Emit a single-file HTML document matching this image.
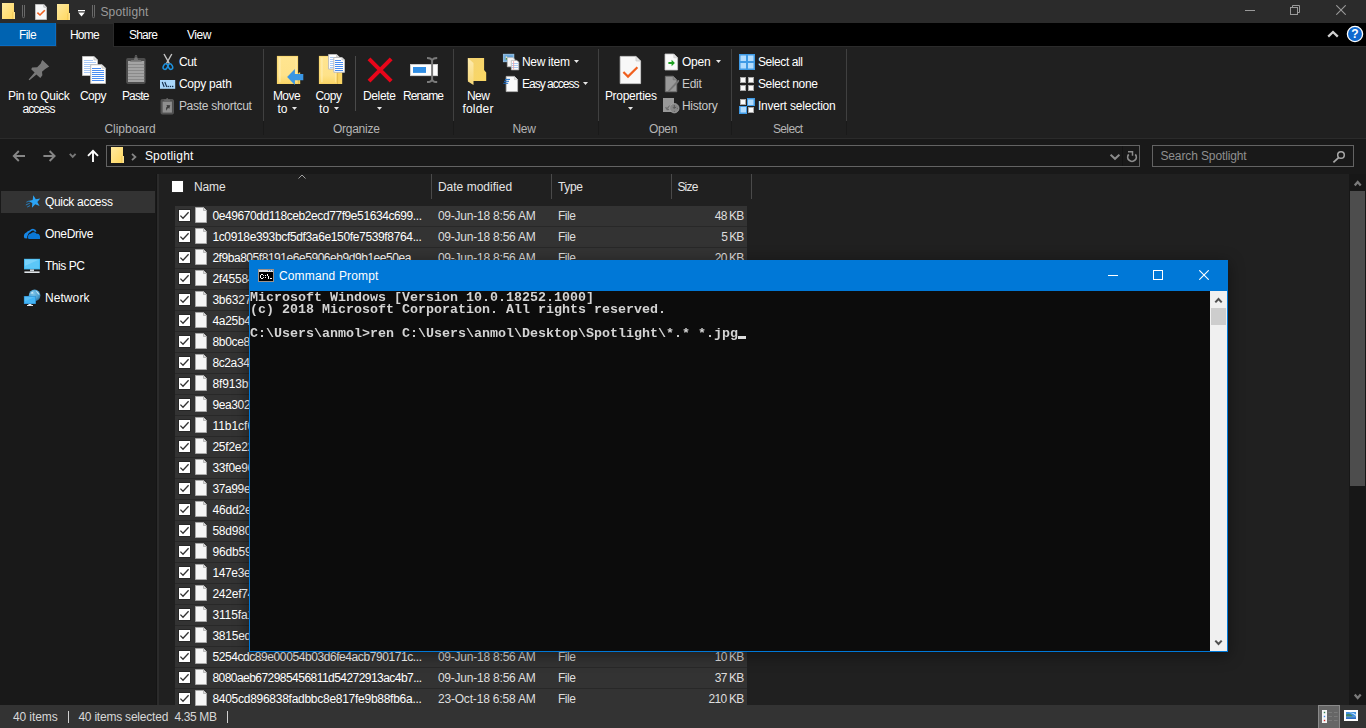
<!DOCTYPE html>
<html lang="en"><head><meta charset="utf-8"><title>Spotlight</title>
<style>
html,body{margin:0;padding:0;font-family:"Liberation Sans", sans-serif;}
body{width:1366px;height:728px;overflow:hidden;background:#191919;position:relative;font-family:"Liberation Sans", sans-serif;}
#r{position:absolute;left:0;top:0;width:1366px;height:728px;overflow:hidden;}
#r div,#r svg,#r span.t,#r pre{position:absolute;display:block;}
span.t{white-space:pre;font-family:"Liberation Sans", sans-serif;}
pre.c{margin:0;font-family:"Liberation Mono", monospace;font-weight:700;font-size:13.333px;line-height:12px;height:12px;color:#d4d4d4;will-change:transform;}
</style></head>
<body><div id="r">
<div style="left:0px;top:0px;width:1366px;height:23px;background:#2b2b2b;"></div>
<div style="left:0px;top:23px;width:1366px;height:23px;background:#000;"></div>
<div style="left:0px;top:23px;width:56px;height:23px;background:#0063b1;"></div>
<div style="left:56px;top:23px;width:58px;height:24px;background:#202020;"></div>
<div style="left:0px;top:46px;width:1366px;height:92px;background:#202020;"></div>
<div style="left:56px;top:23px;width:58px;height:1px;background:#2b2b2b;"></div>
<div style="left:56px;top:23px;width:1px;height:24px;background:#2b2b2b;"></div>
<div style="left:0px;top:46px;width:57px;height:1px;background:#2b2b2b;"></div>
<div style="left:0px;top:45px;width:56px;height:1px;background:#0a6cc2;"></div>
<div style="left:55px;top:23px;width:1px;height:23px;background:#0a6cc2;"></div>
<div style="left:113px;top:23px;width:1px;height:24px;background:#2b2b2b;"></div>
<div style="left:114px;top:46px;width:1252px;height:1px;background:#2b2b2b;"></div>
<div style="left:0px;top:138px;width:1366px;height:1px;background:#2b2b2b;"></div>
<div style="left:0px;top:139px;width:1366px;height:35px;background:#191919;"></div>
<div style="left:0px;top:174px;width:157px;height:531px;background:#191919;"></div>
<div style="left:156px;top:174px;width:1px;height:531px;background:#151515;"></div>
<div style="left:157px;top:174px;width:2px;height:531px;background:#2b2b2b;"></div>
<div style="left:159px;top:174px;width:1190px;height:531px;background:#202020;"></div>
<div style="left:1349px;top:174px;width:17px;height:531px;background:#171717;"></div>
<div style="left:1350px;top:191px;width:15px;height:295px;background:#4d4d4d;"></div>
<div style="left:0px;top:705px;width:1366px;height:23px;background:#333333;"></div>
<svg style="left:2px;top:3px;" width="14" height="17" viewBox="0 0 14 17"><defs><linearGradient id="fg2" x1="0" y1="0" x2="1" y2="1"><stop offset="0" stop-color="#ffeaa0"/><stop offset="1" stop-color="#ffd75e"/></linearGradient></defs><rect x="0" y="0" width="12" height="16" fill="url(#fg2)"/><rect x="11" y="9" width="2" height="7" fill="#ffe38c"/><rect x="10.6" y="9" width="0.7" height="7" fill="#e9bd4a"/></svg>
<svg style="left:22px;top:5px;" width="4" height="14" viewBox="0 0 4 14"><path d="M0.5 0V11.6Q0.5 12.7 1.5 12.7Q2.5 12.7 2.5 11.6V0" fill="none" stroke="#707070" stroke-width="0.9"/></svg>
<svg style="left:35px;top:4px;" width="12" height="16" viewBox="0 0 12 16"><path d="M0.5 0.5H8.8L11.5 3.2V15.5H0.5Z" fill="#f8f8f8" stroke="#bdbdbd" stroke-width="1"/><path d="M8.8 0.5V3.2H11.5" fill="#ececec" stroke="#b4b4b4" stroke-width="0.8"/><path d="M2.4 8.6L5 11L9.8 6.2" fill="none" stroke="#f0601f" stroke-width="1.6"/></svg>
<svg style="left:57px;top:4px;" width="14" height="17" viewBox="0 0 14 17"><defs><linearGradient id="fg57" x1="0" y1="0" x2="1" y2="1"><stop offset="0" stop-color="#ffeaa0"/><stop offset="1" stop-color="#ffd75e"/></linearGradient></defs><rect x="0" y="0" width="12" height="16" fill="url(#fg57)"/><rect x="11" y="9" width="2" height="7" fill="#ffe38c"/><rect x="10.6" y="9" width="0.7" height="7" fill="#e9bd4a"/></svg>
<svg style="left:77px;top:9px;" width="9" height="9" viewBox="0 0 9 9"><rect x="1" y="1" width="7" height="1.3" fill="#fff"/><path d="M1.2 3.6H7.8L4.5 7.6Z" fill="#fff"/></svg>
<svg style="left:92px;top:5px;" width="4" height="14" viewBox="0 0 4 14"><path d="M0.5 0V11.6Q0.5 12.7 1.5 12.7Q2.5 12.7 2.5 11.6V0" fill="none" stroke="#707070" stroke-width="0.9"/></svg>
<span id="t1" class="t" style="top:4px;font-size:12px;line-height:17px;color:#9a9a9a;letter-spacing:0.166px;left:100.40px;">Spotlight</span>
<svg style="left:1245px;top:10px;" width="10" height="1" viewBox="0 0 10 1"><rect width="10" height="1" fill="#9a9a9a"/></svg>
<svg style="left:1290px;top:5px;" width="10" height="10" viewBox="0 0 10 10"><path d="M2.5 2.5V0.5H9.5V7.5H7.5" fill="none" stroke="#9a9a9a"/><rect x="0.5" y="2.5" width="7" height="7" fill="none" stroke="#9a9a9a"/></svg>
<svg style="left:1336px;top:5px;" width="10" height="10" viewBox="0 0 10 10"><path d="M0.3 0.3L9.7 9.7M9.7 0.3L0.3 9.7" stroke="#9a9a9a" stroke-width="1.1" fill="none"/></svg>
<span id="t2" class="t" style="top:27px;font-size:12px;line-height:17px;color:#fff;letter-spacing:-0.536px;left:18.90px;">File</span>
<span id="t3" class="t" style="top:27px;font-size:12px;line-height:17px;color:#fff;letter-spacing:-0.704px;left:69.90px;">Home</span>
<span id="t4" class="t" style="top:27px;font-size:12px;line-height:17px;color:#fff;letter-spacing:-0.766px;left:128.90px;">Share</span>
<span id="t5" class="t" style="top:27px;font-size:12px;line-height:17px;color:#fff;letter-spacing:-0.399px;left:186.90px;">View</span>
<svg style="left:1327px;top:30px;" width="12" height="8" viewBox="0 0 12 8"><path d="M1.2 6.6L6 2L10.8 6.6" fill="none" stroke="#d0d0d0" stroke-width="2.3"/></svg>
<svg style="left:1346px;top:25px;" width="18" height="18" viewBox="0 0 18 18"><circle cx="9" cy="9" r="7.6" fill="#0f69cf" stroke="#fff" stroke-width="1.3"/><text x="9" y="13.4" font-family="Liberation Sans" font-weight="700" font-size="12" text-anchor="middle" fill="#fff">?</text></svg>
<div style="left:263px;top:49px;width:1px;height:72px;background:#404040;"></div>
<div style="left:263px;top:121px;width:1px;height:14px;background:#1a1a1a;"></div>
<div style="left:453px;top:49px;width:1px;height:72px;background:#404040;"></div>
<div style="left:453px;top:121px;width:1px;height:14px;background:#1a1a1a;"></div>
<div style="left:598px;top:49px;width:1px;height:72px;background:#404040;"></div>
<div style="left:598px;top:121px;width:1px;height:14px;background:#1a1a1a;"></div>
<div style="left:731px;top:49px;width:1px;height:72px;background:#404040;"></div>
<div style="left:731px;top:121px;width:1px;height:14px;background:#1a1a1a;"></div>
<div style="left:846px;top:49px;width:1px;height:72px;background:#404040;"></div>
<div style="left:846px;top:121px;width:1px;height:14px;background:#1a1a1a;"></div>
<div style="left:355px;top:56px;width:1px;height:55px;background:#4a4a4a;"></div>
<svg style="left:28px;top:59px;" width="23" height="23" viewBox="0 0 23 23"><path d="M14.4 0.9L21.2 7.5L17.2 10L14 12.8L14.4 16.2L12.3 19.1L8.4 15.4L1.5 21.3L0.6 20.4L6.6 13.5L3.2 10.2L4.1 8.5L9.2 8.2L12.8 4.6L13.5 2.4Z" fill="#787878"/></svg>
<span id="t6" class="t" style="top:88px;font-size:12px;line-height:17px;color:#fff;letter-spacing:-0.250px;left:7.90px;">Pin to Quick</span>
<span id="t7" class="t" style="top:101px;font-size:12px;line-height:17px;color:#fff;letter-spacing:-0.860px;left:22.40px;">access</span>
<svg style="left:82px;top:55px;" width="25" height="30" viewBox="0 0 25 30"><path d="M0.5 1.5H12L15.5 5V20.5H0.5Z" fill="#fff" stroke="#bcbcbc" stroke-width="1"/><path d="M12 1.5V5H15.5" fill="#e8e8e8" stroke="#bcbcbc" stroke-width="0.7"/><rect shape-rendering="crispEdges" x="2" y="5" width="9" height="1" fill="#a9c9f6"/><rect shape-rendering="crispEdges" x="2" y="7" width="12" height="1" fill="#a9c9f6"/><rect shape-rendering="crispEdges" x="2" y="9" width="12" height="1" fill="#a9c9f6"/><rect shape-rendering="crispEdges" x="2" y="11" width="12" height="1" fill="#a9c9f6"/><rect shape-rendering="crispEdges" x="2" y="13" width="12" height="1" fill="#a9c9f6"/><rect shape-rendering="crispEdges" x="2" y="15" width="12" height="1" fill="#a9c9f6"/><rect shape-rendering="crispEdges" x="2" y="17" width="12" height="1" fill="#a9c9f6"/><path d="M8.7 9.7H20.0L23.5 13.2V28.5H8.7Z" fill="#fff" stroke="#bcbcbc" stroke-width="1"/><path d="M20.0 9.7V13.2H23.5" fill="#e8e8e8" stroke="#bcbcbc" stroke-width="0.7"/><rect shape-rendering="crispEdges" x="10" y="13" width="9" height="1" fill="#4a8df0"/><rect shape-rendering="crispEdges" x="10" y="15" width="12" height="1" fill="#4a8df0"/><rect shape-rendering="crispEdges" x="10" y="17" width="12" height="1" fill="#4a8df0"/><rect shape-rendering="crispEdges" x="10" y="19" width="12" height="1" fill="#4a8df0"/><rect shape-rendering="crispEdges" x="10" y="21" width="12" height="1" fill="#4a8df0"/><rect shape-rendering="crispEdges" x="10" y="23" width="12" height="1" fill="#4a8df0"/><rect shape-rendering="crispEdges" x="10" y="25" width="12" height="1" fill="#4a8df0"/></svg>
<span id="t8" class="t" style="top:88px;font-size:12px;line-height:17px;color:#fff;letter-spacing:-0.454px;left:79.90px;">Copy</span>
<svg style="left:125px;top:54px;" width="22" height="31" viewBox="0 0 22 31"><rect x="1.1" y="4.1" width="19.6" height="25.8" rx="1.8" fill="#4e4e4e"/><rect x="3" y="7" width="16.2" height="21" fill="#a4a4a4"/><rect x="3" y="10" width="16.2" height="1" fill="#8a8a8a"/><rect x="3" y="13" width="16.2" height="1" fill="#8a8a8a"/><rect x="3" y="16" width="16.2" height="1" fill="#8a8a8a"/><rect x="3" y="19" width="16.2" height="1" fill="#8a8a8a"/><rect x="3" y="22" width="16.2" height="1" fill="#8a8a8a"/><rect x="3" y="25" width="16.2" height="1" fill="#8a8a8a"/><path d="M4.9 7.8L6.4 5.9H8.9L9.6 3.8Q9.6 1 11 1Q12.4 1 12.4 3.8L13.1 5.9H15.6L17 7.8Z" fill="#747474"/><circle cx="11" cy="2.8" r="0.8" fill="#3a3a3a"/></svg>
<span id="t9" class="t" style="top:88px;font-size:12px;line-height:17px;color:#fff;letter-spacing:-0.798px;left:121.90px;">Paste</span>
<svg style="left:161px;top:53px;" width="14" height="18" viewBox="0 0 14 18"><path d="M3 1L8.4 10.6M10.8 1L5.4 10.6" stroke="#c4c4c4" stroke-width="1.4" fill="none"/><ellipse cx="4.4" cy="13.6" rx="2" ry="2.9" transform="rotate(28 4.4 13.6)" fill="none" stroke="#1e93e0" stroke-width="1.5"/><ellipse cx="9.4" cy="13.6" rx="2" ry="2.9" transform="rotate(-28 9.4 13.6)" fill="none" stroke="#1e93e0" stroke-width="1.5"/></svg>
<span id="t10" class="t" style="top:54px;font-size:12px;line-height:17px;color:#fff;letter-spacing:-0.329px;left:178.90px;">Cut</span>
<svg style="left:160px;top:80px;" width="16" height="10" viewBox="0 0 16 10"><rect x="0" y="0" width="15.2" height="8.8" fill="#aad7fb"/><path d="M2.2 2L4.2 7M4.8 2L6.8 7" stroke="#15304e" stroke-width="1.1" fill="none"/><rect x="7.6" y="5.8" width="1.3" height="1.3" fill="#15304e"/><rect x="9.8" y="5.8" width="1.3" height="1.3" fill="#15304e"/><rect x="12" y="5.8" width="1.3" height="1.3" fill="#15304e"/></svg>
<span id="t11" class="t" style="top:76px;font-size:12px;line-height:17px;color:#fff;letter-spacing:-0.223px;left:178.90px;">Copy path</span>
<svg style="left:160px;top:97px;" width="15" height="18" viewBox="0 0 15 18"><rect x="1" y="2.5" width="12.5" height="14.6" rx="1.3" fill="#4f4f4f" stroke="#5c5c5c" stroke-width="0.8"/><rect x="2.6" y="4.6" width="9.3" height="11" fill="#8f8f8f"/><path d="M4.2 4.6V2.6H6Q6.2 1 7.2 1Q8.2 1 8.4 2.6H10.2V4.6Z" fill="#666"/><path d="M5 12.8Q5.2 9.4 8 9.2V7.6L11 10.2L8 12.6V11Q6.2 11 5 12.8Z" fill="#3c3c3c" transform="rotate(-35 7.6 10.4)"/></svg>
<span id="t12" class="t" style="top:98px;font-size:12px;line-height:17px;color:#c9c9c9;letter-spacing:-0.287px;left:178.90px;">Paste shortcut</span>
<span id="t13" class="t" style="top:121px;font-size:12px;line-height:17px;color:#b4b4b4;letter-spacing:-0.019px;left:104.40px;">Clipboard</span>
<svg style="left:276px;top:55px;" width="28" height="31" viewBox="0 0 28 31"><defs><linearGradient id="fbg" x1="0" y1="0" x2="0" y2="1"><stop offset="0" stop-color="#ffe590"/><stop offset="0.7" stop-color="#fee28a"/><stop offset="1" stop-color="#fbd769"/></linearGradient></defs><rect x="0.9" y="0.9" width="21.2" height="28.1" fill="#f7d366"/><rect x="1.6" y="1.6" width="19.8" height="26.5" fill="url(#fbg)"/><rect x="3.5" y="2.5" width="0.9" height="24.700000000000003" fill="#fff3c4" opacity="0.85"/><rect x="19.7" y="2.5" width="0.8" height="24.700000000000003" fill="#fff3c4" opacity="0.6"/><path d="M22.1 19L23 17.6H24.2V29H22.1Z" fill="#f8cf58"/><path d="M11.1 22L18.9 14V18.9H27.3V25.2H18.9V30.1Z" fill="#3a96e4"/></svg>
<span id="t14" class="t" style="top:88px;font-size:12px;line-height:17px;color:#fff;letter-spacing:-0.536px;left:272.90px;">Move</span>
<span id="t15" class="t" style="top:101px;font-size:12px;line-height:17px;color:#fff;letter-spacing:0.092px;left:277.40px;">to</span>
<svg style="left:292px;top:107px;" width="5" height="3" viewBox="0 0 5 3"><path d="M0 0H5L2.5 3Z" fill="#e6e6e6"/></svg>
<svg style="left:318px;top:53px;" width="28" height="33" viewBox="0 0 28 33"><defs><linearGradient id="fbg" x1="0" y1="0" x2="0" y2="1"><stop offset="0" stop-color="#ffe590"/><stop offset="0.7" stop-color="#fee28a"/><stop offset="1" stop-color="#fbd769"/></linearGradient></defs><rect x="0.9" y="2.9" width="18.4" height="28.1" fill="#f7d366"/><rect x="1.6" y="3.5999999999999996" width="17.0" height="26.5" fill="url(#fbg)"/><rect x="3.5" y="4.5" width="0.9" height="24.700000000000003" fill="#fff3c4" opacity="0.85"/><rect x="16.9" y="4.5" width="0.8" height="24.700000000000003" fill="#fff3c4" opacity="0.6"/><rect x="19.3" y="14" width="4.9" height="17" fill="#f9d463"/><rect x="19.3" y="14" width="0.8" height="17" fill="#eec351"/><path d="M10.6 1.5H18.7L21.2 4V16.1H10.6Z" fill="#fff" stroke="#bcbcbc" stroke-width="1"/><path d="M18.7 1.5V4H21.2" fill="#e8e8e8" stroke="#bcbcbc" stroke-width="0.7"/><rect shape-rendering="crispEdges" x="12" y="4" width="6" height="1" fill="#a9c9f6"/><rect shape-rendering="crispEdges" x="12" y="6" width="8" height="1" fill="#a9c9f6"/><rect shape-rendering="crispEdges" x="12" y="8" width="8" height="1" fill="#a9c9f6"/><rect shape-rendering="crispEdges" x="12" y="10" width="8" height="1" fill="#a9c9f6"/><rect shape-rendering="crispEdges" x="12" y="12" width="8" height="1" fill="#a9c9f6"/><rect shape-rendering="crispEdges" x="12" y="14" width="8" height="1" fill="#a9c9f6"/><path d="M15.8 4.5H24.0L26.5 7V19.3H15.8Z" fill="#fff" stroke="#bcbcbc" stroke-width="1"/><path d="M24.0 4.5V7H26.5" fill="#e8e8e8" stroke="#bcbcbc" stroke-width="0.7"/><rect shape-rendering="crispEdges" x="17" y="7" width="6" height="1" fill="#4a8df0"/><rect shape-rendering="crispEdges" x="17" y="9" width="8" height="1" fill="#4a8df0"/><rect shape-rendering="crispEdges" x="17" y="11" width="8" height="1" fill="#4a8df0"/><rect shape-rendering="crispEdges" x="17" y="13" width="8" height="1" fill="#4a8df0"/><rect shape-rendering="crispEdges" x="17" y="15" width="8" height="1" fill="#4a8df0"/><rect shape-rendering="crispEdges" x="17" y="17" width="8" height="1" fill="#4a8df0"/></svg>
<span id="t16" class="t" style="top:88px;font-size:12px;line-height:17px;color:#fff;letter-spacing:-0.454px;left:315.40px;">Copy</span>
<span id="t17" class="t" style="top:101px;font-size:12px;line-height:17px;color:#fff;letter-spacing:0.092px;left:319.00px;">to</span>
<svg style="left:334px;top:107px;" width="5" height="3" viewBox="0 0 5 3"><path d="M0 0H5L2.5 3Z" fill="#e6e6e6"/></svg>
<svg style="left:367px;top:57px;" width="26" height="26" viewBox="0 0 26 26"><path d="M2 1.8L24.2 24.2M24.2 1.8L2 24.2" stroke="#e8061a" stroke-width="4" fill="none"/></svg>
<span id="t18" class="t" style="top:88px;font-size:12px;line-height:17px;color:#fff;letter-spacing:-0.331px;left:362.90px;">Delete</span>
<svg style="left:377px;top:107px;" width="5" height="3" viewBox="0 0 5 3"><path d="M0 0H5L2.5 3Z" fill="#e6e6e6"/></svg>
<svg style="left:409px;top:56px;" width="30" height="28" viewBox="0 0 30 28"><rect x="1.3" y="8.3" width="27.4" height="11.5" fill="#fdfdfd" stroke="#d5d5d5" stroke-width="0.6"/><rect x="4" y="11" width="13" height="5.9" fill="#2f8de4"/><path d="M18 1.9Q22.4 1.9 23.1 4.6Q23.8 1.9 28.2 1.9M18 26.1Q22.4 26.1 23.1 23.4Q23.8 26.1 28.2 26.1M23.1 4V24" fill="none" stroke="#7a7a7a" stroke-width="2"/></svg>
<span id="t19" class="t" style="top:88px;font-size:12px;line-height:17px;color:#fff;letter-spacing:-0.860px;left:402.90px;">Rename</span>
<span id="t20" class="t" style="top:121px;font-size:12px;line-height:17px;color:#b4b4b4;letter-spacing:-0.250px;left:332.90px;">Organize</span>
<svg style="left:467px;top:57px;" width="21" height="30" viewBox="0 0 21 30"><defs><linearGradient id="nf1" x1="0" y1="0" x2="1" y2="1"><stop offset="0" stop-color="#f3d272"/><stop offset="1" stop-color="#fbd862"/></linearGradient><linearGradient id="nf2" x1="0" y1="0" x2="0" y2="1"><stop offset="0" stop-color="#fdebb0"/><stop offset="1" stop-color="#f7d878"/></linearGradient></defs><path d="M0.9 0.9H17.1V13L19.2 15.4V24H5V26L0.9 23Z" fill="url(#nf1)"/><path d="M0.9 0.9L6.5 6V28L0.9 24.5Z" fill="url(#nf2)"/></svg>
<span id="t21" class="t" style="top:88px;font-size:12px;line-height:17px;color:#fff;letter-spacing:-0.439px;left:466.90px;">New</span>
<span id="t22" class="t" style="top:101px;font-size:12px;line-height:17px;color:#fff;letter-spacing:0.195px;left:462.40px;">folder</span>
<svg style="left:502px;top:53px;" width="18" height="18" viewBox="0 0 18 18"><rect x="1.3" y="1.2" width="10.6" height="7.6" fill="#8cc0ea" stroke="#9ecdf0" stroke-width="0.7"/><rect x="2.4" y="2.3" width="8.4" height="5.4" fill="#5f9fd6"/><rect x="3.6" y="3.4" width="1.6" height="3.4" fill="#e6e0c0"/><rect x="3.8" y="5" width="1.2" height="1.8" fill="#3f8a4a"/><path d="M5.3 4.6H11L12.8 6.4V13.8H5.3Z" fill="#f7f7f7" stroke="#b5b5b5" stroke-width="0.7"/><path d="M9.3 7.4H15L16.8 9.2V16.9H9.3Z" fill="#fcfcfc" stroke="#adadad" stroke-width="0.7"/><path d="M10 10.5H16M10 12.5H16M10 14.5H16" stroke="#9fc4f0" stroke-width="0.9"/><path d="M11.6 8V16.4" stroke="#f0a0a0" stroke-width="0.8"/></svg>
<span id="t23" class="t" style="top:54px;font-size:12px;line-height:17px;color:#fff;letter-spacing:-0.289px;left:521.90px;">New item</span>
<svg style="left:574px;top:60px;" width="5" height="3" viewBox="0 0 5 3"><path d="M0 0H5L2.5 3Z" fill="#e6e6e6"/></svg>
<svg style="left:502px;top:75px;" width="18" height="18" viewBox="0 0 18 18"><path d="M4.2 1.4H12.4L15.6 4.6V16.6H4.2Z" fill="#fbfbfb" stroke="#bdbdbd" stroke-width="0.8"/><path d="M12.4 1.4V4.6H15.6" fill="#e1e1e1" stroke="#bdbdbd" stroke-width="0.6"/><path d="M3 4.4H8M2 6.3H7M1.3 8.3H6.2" stroke="#1e6fc8" stroke-width="1"/></svg>
<span id="t24" class="t" style="top:76px;font-size:12px;line-height:17px;color:#fff;letter-spacing:-0.969px;left:521.90px;">Easy access</span>
<svg style="left:583px;top:82px;" width="5" height="3" viewBox="0 0 5 3"><path d="M0 0H5L2.5 3Z" fill="#e6e6e6"/></svg>
<span id="t25" class="t" style="top:121px;font-size:12px;line-height:17px;color:#b4b4b4;letter-spacing:-0.272px;left:512.40px;">New</span>
<svg style="left:619px;top:55px;" width="23" height="30" viewBox="0 0 23 30"><path d="M1.2 1.4H17L21.6 6V28.6H1.2Z" fill="#f8f8f8" stroke="#d2d2d2" stroke-width="0.8"/><path d="M17 1.4V6H21.6" fill="#e2e2e2" stroke="#c4c4c4" stroke-width="0.7"/><path d="M4.4 17L9 21.6L18.4 12.2" fill="none" stroke="#f0601f" stroke-width="2.2"/></svg>
<span id="t26" class="t" style="top:88px;font-size:12px;line-height:17px;color:#fff;letter-spacing:-0.300px;left:604.90px;">Properties</span>
<svg style="left:628px;top:107px;" width="5" height="3" viewBox="0 0 5 3"><path d="M0 0H5L2.5 3Z" fill="#e6e6e6"/></svg>
<svg style="left:664px;top:53px;" width="15" height="18" viewBox="0 0 15 18"><path d="M1 1H9.8L13.6 4.8V17H1Z" fill="#fafafa" stroke="#c4c4c4" stroke-width="0.8"/><path d="M9.8 1V4.8H13.6" fill="#e1e1e1" stroke="#c4c4c4" stroke-width="0.6"/><path d="M4.4 9.1H7.6V6.8L10.9 10L7.6 13.2V10.9H4.4Z" fill="#1fa022"/></svg>
<span id="t27" class="t" style="top:54px;font-size:12px;line-height:17px;color:#fff;letter-spacing:-0.165px;left:681.90px;">Open</span>
<svg style="left:716px;top:60px;" width="5" height="3" viewBox="0 0 5 3"><path d="M0 0H5L2.5 3Z" fill="#e6e6e6"/></svg>
<svg style="left:664px;top:75px;" width="16" height="18" viewBox="0 0 16 18"><path d="M1.3 1.2H9.2L12.8 4.8V16.8H1.3Z" fill="#999" stroke="#6c6c6c" stroke-width="0.8"/><path d="M9.2 1.2V4.8H12.8" fill="#8a8a8a" stroke="#6c6c6c" stroke-width="0.6"/><path d="M4 15.8L13 5.8L14.6 7.2L5.4 16.4Z" fill="#777"/><path d="M13 5.8L15.2 5L14.6 7.2Z" fill="#888"/></svg>
<span id="t28" class="t" style="top:76px;font-size:12px;line-height:17px;color:#c9c9c9;letter-spacing:-0.247px;left:681.90px;">Edit</span>
<svg style="left:662px;top:97px;" width="18" height="18" viewBox="0 0 18 18"><rect x="1" y="1" width="11" height="14" fill="#999"/><path d="M3.6 10.2L5.2 12.6L7.4 12.4M4.6 12Q7 9 9.4 8.4" fill="none" stroke="#6c6c6c" stroke-width="1.2"/><circle cx="12.3" cy="11.2" r="4.7" fill="#878787" stroke="#a6a6a6" stroke-width="0.8"/><path d="M12.3 8V11.2L14.2 10M10.8 10.4L12.3 11.2" fill="none" stroke="#555" stroke-width="0.9"/><circle cx="12.3" cy="14.2" r="0.5" fill="#555"/><circle cx="15.3" cy="11.2" r="0.5" fill="#555"/></svg>
<span id="t29" class="t" style="top:98px;font-size:12px;line-height:17px;color:#c9c9c9;letter-spacing:-0.235px;left:681.90px;">History</span>
<span id="t30" class="t" style="top:121px;font-size:12px;line-height:17px;color:#b4b4b4;letter-spacing:-0.290px;left:648.90px;">Open</span>
<svg style="left:739px;top:54px;" width="16" height="16" viewBox="0 0 16 16"><rect x="0" y="0" width="8" height="8" fill="#3f9ae5"/><rect x="1.5" y="1.5" width="5.5" height="5.5" fill="#b3dcfd"/><rect x="8" y="0" width="8" height="8" fill="#3f9ae5"/><rect x="9" y="1.5" width="5.5" height="5.5" fill="#b3dcfd"/><rect x="0" y="8" width="8" height="8" fill="#3f9ae5"/><rect x="1.5" y="9" width="5.5" height="5.5" fill="#b3dcfd"/><rect x="8" y="8" width="8" height="8" fill="#3f9ae5"/><rect x="9" y="9" width="5.5" height="5.5" fill="#b3dcfd"/></svg>
<svg style="left:739px;top:76px;" width="16" height="16" viewBox="0 0 16 16"><rect x="1" y="1" width="6" height="6" fill="#a9a9a9"/><rect x="2" y="2" width="4" height="4" fill="#fafafa"/><rect x="9" y="1" width="6" height="6" fill="#a9a9a9"/><rect x="10" y="2" width="4" height="4" fill="#fafafa"/><rect x="1" y="9" width="6" height="6" fill="#a9a9a9"/><rect x="2" y="10" width="4" height="4" fill="#fafafa"/><rect x="9" y="9" width="6" height="6" fill="#a9a9a9"/><rect x="10" y="10" width="4" height="4" fill="#fafafa"/></svg>
<svg style="left:739px;top:98px;" width="16" height="16" viewBox="0 0 16 16"><rect x="1" y="1" width="6" height="6" fill="#a9a9a9"/><rect x="2" y="2" width="4" height="4" fill="#fafafa"/><rect x="8" y="0" width="8" height="8" fill="#3f9ae5"/><rect x="9" y="1.5" width="5.5" height="5.5" fill="#b3dcfd"/><rect x="0" y="8" width="8" height="8" fill="#3f9ae5"/><rect x="1.5" y="9" width="5.5" height="5.5" fill="#b3dcfd"/><rect x="9" y="9" width="6" height="6" fill="#a9a9a9"/><rect x="10" y="10" width="4" height="4" fill="#fafafa"/></svg>
<span id="t31" class="t" style="top:54px;font-size:12px;line-height:17px;color:#fff;letter-spacing:-0.400px;left:757.90px;">Select all</span>
<span id="t32" class="t" style="top:76px;font-size:12px;line-height:17px;color:#fff;letter-spacing:-0.336px;left:757.90px;">Select none</span>
<span id="t33" class="t" style="top:98px;font-size:12px;line-height:17px;color:#fff;letter-spacing:-0.189px;left:757.90px;">Invert selection</span>
<span id="t34" class="t" style="top:121px;font-size:12px;line-height:17px;color:#b4b4b4;letter-spacing:-0.610px;left:772.90px;">Select</span>
<svg style="left:12px;top:150px;" width="14" height="12" viewBox="0 0 14 12"><path d="M13 6H2M6.8 1L1.8 6L6.8 11" fill="none" stroke="#868686" stroke-width="1.9"/></svg>
<svg style="left:43px;top:150px;" width="14" height="12" viewBox="0 0 14 12"><path d="M0.4 6H11.4M6.6 1L11.6 6L6.6 11" fill="none" stroke="#868686" stroke-width="1.9"/></svg>
<svg style="left:69px;top:153px;" width="8" height="6" viewBox="0 0 8 6"><path d="M0.8 0.9L3.7 3.9L6.6 0.9" fill="none" stroke="#787878" stroke-width="1.9"/></svg>
<svg style="left:87px;top:149px;" width="12" height="14" viewBox="0 0 12 14"><path d="M6 13V2M1 6.8L6 1.8L11 6.8" fill="none" stroke="#ffffff" stroke-width="1.9"/></svg>
<div style="left:106px;top:145px;width:1034px;height:22px;background:#191919;box-sizing:border-box;border:1px solid #636363;"></div>
<svg style="left:111px;top:147px;" width="14" height="17" viewBox="0 0 14 17"><defs><linearGradient id="fg111" x1="0" y1="0" x2="1" y2="1"><stop offset="0" stop-color="#ffeaa0"/><stop offset="1" stop-color="#ffd75e"/></linearGradient></defs><rect x="0" y="0" width="12" height="16" fill="url(#fg111)"/><rect x="11" y="9" width="2" height="7" fill="#ffe38c"/><rect x="10.6" y="9" width="0.7" height="7" fill="#e9bd4a"/></svg>
<svg style="left:131px;top:153px;" width="6" height="8" viewBox="0 0 6 8"><path d="M1 0.8L4.4 4L1 7.2" fill="none" stroke="#868686" stroke-width="1.8"/></svg>
<span id="t35" class="t" style="top:148px;font-size:12px;line-height:17px;color:#fff;letter-spacing:0.222px;left:144.90px;">Spotlight</span>
<svg style="left:1110px;top:153px;" width="10" height="8" viewBox="0 0 10 8"><path d="M0.6 1.7L5 5.8L9.4 1.7" fill="none" stroke="#8c8c8c" stroke-width="2"/></svg>
<div style="left:1122px;top:146px;width:1px;height:20px;background:#131313;"></div>
<svg style="left:1126px;top:149px;" width="13" height="14" viewBox="0 0 13 14"><path d="M9.29 5.34A4.3 4.3 0 1 1 2.71 5.34" fill="none" stroke="#8c8c8c" stroke-width="1.7"/><path d="M2 2.7H6.5V6.8" fill="none" stroke="#8c8c8c" stroke-width="1.5"/></svg>
<div style="left:1152px;top:145px;width:202px;height:22px;background:#191919;box-sizing:border-box;border:1px solid #636363;"></div>
<span id="t36" class="t" style="top:148px;font-size:12px;line-height:17px;color:#8f8f8f;letter-spacing:-0.116px;left:1160.40px;">Search Spotlight</span>
<svg style="left:1332px;top:150px;" width="14" height="14" viewBox="0 0 14 14"><circle cx="9" cy="5" r="3.3" fill="none" stroke="#a8a8a8" stroke-width="1.5"/><path d="M6.6 7.6L1.4 12.4" stroke="#a8a8a8" stroke-width="1.7"/></svg>
<div style="left:1px;top:191px;width:154px;height:22px;background:#333333;"></div>
<svg style="left:25px;top:195px;" width="16" height="14" viewBox="0 0 16 14"><g transform="rotate(-12 9.4 6.4)"><path d="M9.6 0.2L11.2 4.6L15.8 4.7L12.2 7.5L13.5 12L9.6 9.4L5.7 12L7 7.5L3.4 4.7L8 4.6Z" fill="#2ba4f5"/></g><path d="M3.8 6.2L1.4 7.2M4.8 8.2L0.8 10M5 10.6L2.2 12" stroke="#2490e0" stroke-width="0.8"/></svg>
<span id="t37" class="t" style="top:194px;font-size:12px;line-height:17px;color:#fff;letter-spacing:-0.305px;left:44.90px;">Quick access</span>
<svg style="left:23px;top:228px;" width="18" height="12" viewBox="0 0 18 12"><path d="M1.4 10.2Q0.4 8.4 1.2 6.6Q1.8 5 3.4 4.6Q4.4 2.6 6.6 2.4Q8.4 0.6 10.6 0.9Q12.8 1.3 13.5 3.6L11.9 3.9Q11.2 2.6 9.8 2.6Q8.2 2.7 7.4 4Q5.6 4.6 5 6.4Q4 8 4.2 10.4Z" fill="#1787e6"/><path d="M5.6 11Q4.4 9.4 5.2 7.4Q6 5.6 8 5.4Q9.4 3.9 11.2 4.2Q12.8 4.5 13.6 5.8Q15.6 5.2 16.5 7Q17.5 8.6 17 11Z" fill="#0a78d8"/></svg>
<span id="t38" class="t" style="top:226px;font-size:12px;line-height:17px;color:#fff;letter-spacing:-0.311px;left:44.90px;">OneDrive</span>
<svg style="left:23px;top:258px;" width="18" height="16" viewBox="0 0 18 16"><rect x="1" y="0.8" width="16" height="10.6" fill="#3cb6f0"/><rect x="1.8" y="1.6" width="14.4" height="9" fill="#5cc7f7"/><path d="M1.8 1.6H16.2L1.8 8Z" fill="#8ad8fb" opacity="0.6"/><rect x="7" y="11.4" width="4" height="1.8" fill="#cfd6dc"/><rect x="1.4" y="13.4" width="15.2" height="1.6" fill="#dfe4e8"/></svg>
<span id="t39" class="t" style="top:258px;font-size:12px;line-height:17px;color:#fff;letter-spacing:-0.427px;left:44.90px;">This PC</span>
<svg style="left:23px;top:289px;" width="18" height="18" viewBox="0 0 18 18"><defs><radialGradient id="gl" cx="0.4" cy="0.35" r="0.75"><stop offset="0" stop-color="#7cc3e8"/><stop offset="0.6" stop-color="#4a9fd0"/><stop offset="1" stop-color="#2a6790"/></radialGradient></defs><circle cx="11.6" cy="6.4" r="5.8" fill="url(#gl)"/><path d="M7.4 4.4Q8.6 2.2 10.6 2.4Q9.6 3.8 10.4 4.8Q8.6 4.4 7.4 4.4ZM12.6 1.8Q15.6 2.6 16.6 6.2Q14.6 5.4 13.8 3.6Z" fill="#d6eef9" opacity="0.85"/><rect x="0.9" y="7" width="12" height="8" rx="0.6" fill="#2f8fd0"/><rect x="1.6" y="7.7" width="10.6" height="6.6" fill="#42b4f5"/><path d="M1.6 7.7H12.2L1.6 12.6Z" fill="#6cc6f8" opacity="0.55"/><rect x="5.4" y="15" width="3" height="1" fill="#e6eaee"/><rect x="4" y="16" width="6" height="1" fill="#dfe4e8"/></svg>
<span id="t40" class="t" style="top:290px;font-size:12px;line-height:17px;color:#fff;letter-spacing:0.098px;left:44.90px;">Network</span>
<span id="t41" class="t" style="top:709px;font-size:12px;line-height:17px;color:#d8d8d8;letter-spacing:-0.082px;left:12.90px;">40 items</span>
<div style="left:68px;top:711px;width:1px;height:12px;background:#d0d0d0;"></div>
<span id="t42" class="t" style="top:709px;font-size:12px;line-height:17px;color:#d8d8d8;letter-spacing:-0.217px;left:78.40px;">40 items selected</span>
<span id="t43" class="t" style="top:709px;font-size:12px;line-height:17px;color:#d8d8d8;letter-spacing:-0.358px;left:174.40px;">4.35 MB</span>
<div style="left:227px;top:711px;width:1px;height:12px;background:#d0d0d0;"></div>
<div style="left:1318px;top:705px;width:22px;height:23px;background:#666;box-sizing:border-box;border:1px solid #8a8a8a;border-bottom:none;"></div>
<svg style="left:1321px;top:709px;" width="18" height="15" viewBox="0 0 18 15"><rect x="1" y="1" width="5" height="13" fill="#f4f4f4"/><rect x="2.8" y="2.8" width="1.4" height="1.4" fill="#2f7a4a"/><rect x="2.8" y="6.8" width="1.4" height="1.4" fill="#3d86e8"/><rect x="2.8" y="10.8" width="1.4" height="1.4" fill="#d62323"/><path d="M7.4 3.5H11M13 3.5H16.6M7.4 7.5H11M13 7.5H16.6M7.4 11.5H11M13 11.5H16.6" stroke="#7d7d7d" stroke-width="0.9"/></svg>
<svg style="left:1344px;top:710px;" width="14" height="11" viewBox="0 0 14 11"><rect x="0" y="0" width="14" height="11" fill="#fdfdfd"/><rect x="2" y="2" width="10" height="7" fill="#3f8fe0"/><path d="M2 4.4Q4 3 6.4 4.2Q8 5 9 6.8H2Z" fill="#3f8468"/><path d="M5 2.6Q9 2.2 12 4.4V6Q9 3.4 5 2.6Z" fill="#cfe8f8"/><rect x="2" y="6.8" width="10" height="2.2" fill="#2a6cc4"/><rect x="2" y="6.6" width="10" height="0.7" fill="#9cc4e8" opacity="0.7"/></svg>
<svg style="left:1354px;top:179px;" width="8" height="8" viewBox="0 0 8 8"><path d="M0.7 6.4L3.7 3L6.7 6.4" fill="none" stroke="#7a7a7a" stroke-width="2.3"/></svg>
<svg style="left:1354px;top:693px;" width="8" height="8" viewBox="0 0 8 8"><path d="M0.7 1.6L3.7 5L6.7 1.6" fill="none" stroke="#7a7a7a" stroke-width="2.3"/></svg>
<div style="left:171px;top:180px;width:13px;height:13px;background:#fff;box-sizing:border-box;border:1px solid #262626;"></div>
<span id="t44" class="t" style="top:179px;font-size:12px;line-height:17px;color:#e4e4e4;letter-spacing:-0.079px;left:193.90px;">Name</span>
<svg style="left:298px;top:174px;" width="8" height="5" viewBox="0 0 8 5"><path d="M0.5 4.5L4 1L7.5 4.5" fill="none" stroke="#a0a0a0" stroke-width="1"/></svg>
<div style="left:431px;top:174px;width:1px;height:25px;background:#4a4a4a;"></div>
<div style="left:551px;top:174px;width:1px;height:25px;background:#4a4a4a;"></div>
<div style="left:671px;top:174px;width:1px;height:25px;background:#4a4a4a;"></div>
<div style="left:751px;top:174px;width:1px;height:25px;background:#4a4a4a;"></div>
<span id="t45" class="t" style="top:179px;font-size:12px;line-height:17px;color:#e4e4e4;letter-spacing:0.012px;left:437.90px;">Date modified</span>
<span id="t46" class="t" style="top:179px;font-size:12px;line-height:17px;color:#e4e4e4;letter-spacing:-0.329px;left:557.90px;">Type</span>
<span id="t47" class="t" style="top:179px;font-size:12px;line-height:17px;color:#e4e4e4;letter-spacing:-0.786px;left:677.40px;">Size</span>
<div style="left:175px;top:206px;width:572px;height:499px;background:#282828;"></div>
<div style="left:175px;top:206px;width:572px;height:20px;background:#333333;"></div>
<svg style="left:178px;top:209px;" width="13" height="13" viewBox="0 0 13 13"><rect x="0.5" y="0.5" width="12" height="12" fill="#fff" stroke="#262626"/><path d="M2.4 6.6L5 9.2L10.6 3.2" fill="none" stroke="#333" stroke-width="1.3"/></svg>
<svg style="left:195px;top:207px;" width="13" height="16" viewBox="0 0 13 16"><path d="M0.5 0.5H8.5L11.5 3.5V15.5H0.5Z" fill="#f6f6f6" stroke="#a9a9a9" stroke-width="1"/><path d="M8.5 0.5V3.5H11.5" fill="#dcdcdc" stroke="#a9a9a9" stroke-width="0.8"/></svg>
<span id="t48" class="t" style="top:208px;font-size:12px;line-height:17px;color:#fff;letter-spacing:-0.411px;left:212.40px;">0e49670dd118ceb2ecd77f9e51634c699...</span>
<span id="t49" class="t" style="top:208px;font-size:12px;line-height:17px;color:#dedede;letter-spacing:-0.218px;left:437.90px;">09-Jun-18 8:56 AM</span>
<span id="t50" class="t" style="top:208px;font-size:12px;line-height:17px;color:#dedede;letter-spacing:-0.411px;left:557.90px;">File</span>
<span id="t51" class="t" style="top:208px;font-size:12px;line-height:17px;color:#dedede;letter-spacing:-0.801px;right:622.50px;">48 KB</span>
<div style="left:175px;top:227px;width:572px;height:20px;background:#333333;"></div>
<svg style="left:178px;top:230px;" width="13" height="13" viewBox="0 0 13 13"><rect x="0.5" y="0.5" width="12" height="12" fill="#fff" stroke="#262626"/><path d="M2.4 6.6L5 9.2L10.6 3.2" fill="none" stroke="#333" stroke-width="1.3"/></svg>
<svg style="left:195px;top:228px;" width="13" height="16" viewBox="0 0 13 16"><path d="M0.5 0.5H8.5L11.5 3.5V15.5H0.5Z" fill="#f6f6f6" stroke="#a9a9a9" stroke-width="1"/><path d="M8.5 0.5V3.5H11.5" fill="#dcdcdc" stroke="#a9a9a9" stroke-width="0.8"/></svg>
<span id="t52" class="t" style="top:229px;font-size:12px;line-height:17px;color:#fff;letter-spacing:-0.352px;left:212.40px;">1c0918e393bcf5df3a6e150fe7539f8764...</span>
<span id="t53" class="t" style="top:229px;font-size:12px;line-height:17px;color:#dedede;letter-spacing:-0.218px;left:437.90px;">09-Jun-18 8:56 AM</span>
<span id="t54" class="t" style="top:229px;font-size:12px;line-height:17px;color:#dedede;letter-spacing:-0.411px;left:557.90px;">File</span>
<span id="t55" class="t" style="top:229px;font-size:12px;line-height:17px;color:#dedede;letter-spacing:-0.954px;right:622.65px;">5 KB</span>
<div style="left:175px;top:248px;width:572px;height:20px;background:#333333;"></div>
<svg style="left:178px;top:251px;" width="13" height="13" viewBox="0 0 13 13"><rect x="0.5" y="0.5" width="12" height="12" fill="#fff" stroke="#262626"/><path d="M2.4 6.6L5 9.2L10.6 3.2" fill="none" stroke="#333" stroke-width="1.3"/></svg>
<svg style="left:195px;top:249px;" width="13" height="16" viewBox="0 0 13 16"><path d="M0.5 0.5H8.5L11.5 3.5V15.5H0.5Z" fill="#f6f6f6" stroke="#a9a9a9" stroke-width="1"/><path d="M8.5 0.5V3.5H11.5" fill="#dcdcdc" stroke="#a9a9a9" stroke-width="0.8"/></svg>
<span id="t56" class="t" style="top:250px;font-size:12px;line-height:17px;color:#fff;letter-spacing:-0.455px;left:212.40px;">2f9ba805f8191e6e5906eb9d9b1ee50ea...</span>
<span id="t57" class="t" style="top:250px;font-size:12px;line-height:17px;color:#dedede;letter-spacing:-0.218px;left:437.90px;">09-Jun-18 8:56 AM</span>
<span id="t58" class="t" style="top:250px;font-size:12px;line-height:17px;color:#dedede;letter-spacing:-0.411px;left:557.90px;">File</span>
<span id="t59" class="t" style="top:250px;font-size:12px;line-height:17px;color:#dedede;letter-spacing:-0.801px;right:622.50px;">20 KB</span>
<div style="left:175px;top:269px;width:572px;height:20px;background:#333333;"></div>
<svg style="left:178px;top:272px;" width="13" height="13" viewBox="0 0 13 13"><rect x="0.5" y="0.5" width="12" height="12" fill="#fff" stroke="#262626"/><path d="M2.4 6.6L5 9.2L10.6 3.2" fill="none" stroke="#333" stroke-width="1.3"/></svg>
<svg style="left:195px;top:270px;" width="13" height="16" viewBox="0 0 13 16"><path d="M0.5 0.5H8.5L11.5 3.5V15.5H0.5Z" fill="#f6f6f6" stroke="#a9a9a9" stroke-width="1"/><path d="M8.5 0.5V3.5H11.5" fill="#dcdcdc" stroke="#a9a9a9" stroke-width="0.8"/></svg>
<span id="t60" class="t" style="top:271px;font-size:12px;line-height:17px;color:#fff;letter-spacing:-0.202px;left:212.40px;">2f45584</span>
<div style="left:175px;top:290px;width:572px;height:20px;background:#333333;"></div>
<svg style="left:178px;top:293px;" width="13" height="13" viewBox="0 0 13 13"><rect x="0.5" y="0.5" width="12" height="12" fill="#fff" stroke="#262626"/><path d="M2.4 6.6L5 9.2L10.6 3.2" fill="none" stroke="#333" stroke-width="1.3"/></svg>
<svg style="left:195px;top:291px;" width="13" height="16" viewBox="0 0 13 16"><path d="M0.5 0.5H8.5L11.5 3.5V15.5H0.5Z" fill="#f6f6f6" stroke="#a9a9a9" stroke-width="1"/><path d="M8.5 0.5V3.5H11.5" fill="#dcdcdc" stroke="#a9a9a9" stroke-width="0.8"/></svg>
<span id="t61" class="t" style="top:292px;font-size:12px;line-height:17px;color:#fff;letter-spacing:-0.206px;left:212.40px;">3b63277</span>
<div style="left:175px;top:311px;width:572px;height:20px;background:#333333;"></div>
<svg style="left:178px;top:314px;" width="13" height="13" viewBox="0 0 13 13"><rect x="0.5" y="0.5" width="12" height="12" fill="#fff" stroke="#262626"/><path d="M2.4 6.6L5 9.2L10.6 3.2" fill="none" stroke="#333" stroke-width="1.3"/></svg>
<svg style="left:195px;top:312px;" width="13" height="16" viewBox="0 0 13 16"><path d="M0.5 0.5H8.5L11.5 3.5V15.5H0.5Z" fill="#f6f6f6" stroke="#a9a9a9" stroke-width="1"/><path d="M8.5 0.5V3.5H11.5" fill="#dcdcdc" stroke="#a9a9a9" stroke-width="0.8"/></svg>
<span id="t62" class="t" style="top:313px;font-size:12px;line-height:17px;color:#fff;letter-spacing:-0.295px;left:212.40px;">4a25b4c</span>
<div style="left:175px;top:332px;width:572px;height:20px;background:#333333;"></div>
<svg style="left:178px;top:335px;" width="13" height="13" viewBox="0 0 13 13"><rect x="0.5" y="0.5" width="12" height="12" fill="#fff" stroke="#262626"/><path d="M2.4 6.6L5 9.2L10.6 3.2" fill="none" stroke="#333" stroke-width="1.3"/></svg>
<svg style="left:195px;top:333px;" width="13" height="16" viewBox="0 0 13 16"><path d="M0.5 0.5H8.5L11.5 3.5V15.5H0.5Z" fill="#f6f6f6" stroke="#a9a9a9" stroke-width="1"/><path d="M8.5 0.5V3.5H11.5" fill="#dcdcdc" stroke="#a9a9a9" stroke-width="0.8"/></svg>
<span id="t63" class="t" style="top:334px;font-size:12px;line-height:17px;color:#fff;letter-spacing:-0.300px;left:212.40px;">8b0ce8e</span>
<div style="left:175px;top:353px;width:572px;height:20px;background:#333333;"></div>
<svg style="left:178px;top:356px;" width="13" height="13" viewBox="0 0 13 13"><rect x="0.5" y="0.5" width="12" height="12" fill="#fff" stroke="#262626"/><path d="M2.4 6.6L5 9.2L10.6 3.2" fill="none" stroke="#333" stroke-width="1.3"/></svg>
<svg style="left:195px;top:354px;" width="13" height="16" viewBox="0 0 13 16"><path d="M0.5 0.5H8.5L11.5 3.5V15.5H0.5Z" fill="#f6f6f6" stroke="#a9a9a9" stroke-width="1"/><path d="M8.5 0.5V3.5H11.5" fill="#dcdcdc" stroke="#a9a9a9" stroke-width="0.8"/></svg>
<span id="t64" class="t" style="top:355px;font-size:12px;line-height:17px;color:#fff;letter-spacing:-0.380px;left:212.40px;">8c2a341</span>
<div style="left:175px;top:374px;width:572px;height:20px;background:#333333;"></div>
<svg style="left:178px;top:377px;" width="13" height="13" viewBox="0 0 13 13"><rect x="0.5" y="0.5" width="12" height="12" fill="#fff" stroke="#262626"/><path d="M2.4 6.6L5 9.2L10.6 3.2" fill="none" stroke="#333" stroke-width="1.3"/></svg>
<svg style="left:195px;top:375px;" width="13" height="16" viewBox="0 0 13 16"><path d="M0.5 0.5H8.5L11.5 3.5V15.5H0.5Z" fill="#f6f6f6" stroke="#a9a9a9" stroke-width="1"/><path d="M8.5 0.5V3.5H11.5" fill="#dcdcdc" stroke="#a9a9a9" stroke-width="0.8"/></svg>
<span id="t65" class="t" style="top:376px;font-size:12px;line-height:17px;color:#fff;letter-spacing:-0.117px;left:212.40px;">8f913b9</span>
<div style="left:175px;top:395px;width:572px;height:20px;background:#333333;"></div>
<svg style="left:178px;top:398px;" width="13" height="13" viewBox="0 0 13 13"><rect x="0.5" y="0.5" width="12" height="12" fill="#fff" stroke="#262626"/><path d="M2.4 6.6L5 9.2L10.6 3.2" fill="none" stroke="#333" stroke-width="1.3"/></svg>
<svg style="left:195px;top:396px;" width="13" height="16" viewBox="0 0 13 16"><path d="M0.5 0.5H8.5L11.5 3.5V15.5H0.5Z" fill="#f6f6f6" stroke="#a9a9a9" stroke-width="1"/><path d="M8.5 0.5V3.5H11.5" fill="#dcdcdc" stroke="#a9a9a9" stroke-width="0.8"/></svg>
<span id="t66" class="t" style="top:397px;font-size:12px;line-height:17px;color:#fff;letter-spacing:-0.371px;left:212.40px;">9ea3025</span>
<div style="left:175px;top:416px;width:572px;height:20px;background:#333333;"></div>
<svg style="left:178px;top:419px;" width="13" height="13" viewBox="0 0 13 13"><rect x="0.5" y="0.5" width="12" height="12" fill="#fff" stroke="#262626"/><path d="M2.4 6.6L5 9.2L10.6 3.2" fill="none" stroke="#333" stroke-width="1.3"/></svg>
<svg style="left:195px;top:417px;" width="13" height="16" viewBox="0 0 13 16"><path d="M0.5 0.5H8.5L11.5 3.5V15.5H0.5Z" fill="#f6f6f6" stroke="#a9a9a9" stroke-width="1"/><path d="M8.5 0.5V3.5H11.5" fill="#dcdcdc" stroke="#a9a9a9" stroke-width="0.8"/></svg>
<span id="t67" class="t" style="top:418px;font-size:12px;line-height:17px;color:#fff;letter-spacing:-0.025px;left:212.40px;">11b1cf6</span>
<div style="left:175px;top:437px;width:572px;height:20px;background:#333333;"></div>
<svg style="left:178px;top:440px;" width="13" height="13" viewBox="0 0 13 13"><rect x="0.5" y="0.5" width="12" height="12" fill="#fff" stroke="#262626"/><path d="M2.4 6.6L5 9.2L10.6 3.2" fill="none" stroke="#333" stroke-width="1.3"/></svg>
<svg style="left:195px;top:438px;" width="13" height="16" viewBox="0 0 13 16"><path d="M0.5 0.5H8.5L11.5 3.5V15.5H0.5Z" fill="#f6f6f6" stroke="#a9a9a9" stroke-width="1"/><path d="M8.5 0.5V3.5H11.5" fill="#dcdcdc" stroke="#a9a9a9" stroke-width="0.8"/></svg>
<span id="t68" class="t" style="top:439px;font-size:12px;line-height:17px;color:#fff;letter-spacing:-0.230px;left:212.40px;">25f2e22</span>
<div style="left:175px;top:458px;width:572px;height:20px;background:#333333;"></div>
<svg style="left:178px;top:461px;" width="13" height="13" viewBox="0 0 13 13"><rect x="0.5" y="0.5" width="12" height="12" fill="#fff" stroke="#262626"/><path d="M2.4 6.6L5 9.2L10.6 3.2" fill="none" stroke="#333" stroke-width="1.3"/></svg>
<svg style="left:195px;top:459px;" width="13" height="16" viewBox="0 0 13 16"><path d="M0.5 0.5H8.5L11.5 3.5V15.5H0.5Z" fill="#f6f6f6" stroke="#a9a9a9" stroke-width="1"/><path d="M8.5 0.5V3.5H11.5" fill="#dcdcdc" stroke="#a9a9a9" stroke-width="0.8"/></svg>
<span id="t69" class="t" style="top:460px;font-size:12px;line-height:17px;color:#fff;letter-spacing:-0.230px;left:212.40px;">33f0e90</span>
<div style="left:175px;top:479px;width:572px;height:20px;background:#333333;"></div>
<svg style="left:178px;top:482px;" width="13" height="13" viewBox="0 0 13 13"><rect x="0.5" y="0.5" width="12" height="12" fill="#fff" stroke="#262626"/><path d="M2.4 6.6L5 9.2L10.6 3.2" fill="none" stroke="#333" stroke-width="1.3"/></svg>
<svg style="left:195px;top:480px;" width="13" height="16" viewBox="0 0 13 16"><path d="M0.5 0.5H8.5L11.5 3.5V15.5H0.5Z" fill="#f6f6f6" stroke="#a9a9a9" stroke-width="1"/><path d="M8.5 0.5V3.5H11.5" fill="#dcdcdc" stroke="#a9a9a9" stroke-width="0.8"/></svg>
<span id="t70" class="t" style="top:481px;font-size:12px;line-height:17px;color:#fff;letter-spacing:-0.371px;left:212.40px;">37a99e3</span>
<div style="left:175px;top:500px;width:572px;height:20px;background:#333333;"></div>
<svg style="left:178px;top:503px;" width="13" height="13" viewBox="0 0 13 13"><rect x="0.5" y="0.5" width="12" height="12" fill="#fff" stroke="#262626"/><path d="M2.4 6.6L5 9.2L10.6 3.2" fill="none" stroke="#333" stroke-width="1.3"/></svg>
<svg style="left:195px;top:501px;" width="13" height="16" viewBox="0 0 13 16"><path d="M0.5 0.5H8.5L11.5 3.5V15.5H0.5Z" fill="#f6f6f6" stroke="#a9a9a9" stroke-width="1"/><path d="M8.5 0.5V3.5H11.5" fill="#dcdcdc" stroke="#a9a9a9" stroke-width="0.8"/></svg>
<span id="t71" class="t" style="top:502px;font-size:12px;line-height:17px;color:#fff;letter-spacing:-0.150px;left:212.40px;">46dd2e8</span>
<div style="left:175px;top:521px;width:572px;height:20px;background:#333333;"></div>
<svg style="left:178px;top:524px;" width="13" height="13" viewBox="0 0 13 13"><rect x="0.5" y="0.5" width="12" height="12" fill="#fff" stroke="#262626"/><path d="M2.4 6.6L5 9.2L10.6 3.2" fill="none" stroke="#333" stroke-width="1.3"/></svg>
<svg style="left:195px;top:522px;" width="13" height="16" viewBox="0 0 13 16"><path d="M0.5 0.5H8.5L11.5 3.5V15.5H0.5Z" fill="#f6f6f6" stroke="#a9a9a9" stroke-width="1"/><path d="M8.5 0.5V3.5H11.5" fill="#dcdcdc" stroke="#a9a9a9" stroke-width="0.8"/></svg>
<span id="t72" class="t" style="top:523px;font-size:12px;line-height:17px;color:#fff;letter-spacing:-0.206px;left:212.40px;">58d9807</span>
<div style="left:175px;top:542px;width:572px;height:20px;background:#333333;"></div>
<svg style="left:178px;top:545px;" width="13" height="13" viewBox="0 0 13 13"><rect x="0.5" y="0.5" width="12" height="12" fill="#fff" stroke="#262626"/><path d="M2.4 6.6L5 9.2L10.6 3.2" fill="none" stroke="#333" stroke-width="1.3"/></svg>
<svg style="left:195px;top:543px;" width="13" height="16" viewBox="0 0 13 16"><path d="M0.5 0.5H8.5L11.5 3.5V15.5H0.5Z" fill="#f6f6f6" stroke="#a9a9a9" stroke-width="1"/><path d="M8.5 0.5V3.5H11.5" fill="#dcdcdc" stroke="#a9a9a9" stroke-width="0.8"/></svg>
<span id="t73" class="t" style="top:544px;font-size:12px;line-height:17px;color:#fff;letter-spacing:-0.174px;left:212.40px;">96db59a</span>
<div style="left:175px;top:563px;width:572px;height:20px;background:#333333;"></div>
<svg style="left:178px;top:566px;" width="13" height="13" viewBox="0 0 13 13"><rect x="0.5" y="0.5" width="12" height="12" fill="#fff" stroke="#262626"/><path d="M2.4 6.6L5 9.2L10.6 3.2" fill="none" stroke="#333" stroke-width="1.3"/></svg>
<svg style="left:195px;top:564px;" width="13" height="16" viewBox="0 0 13 16"><path d="M0.5 0.5H8.5L11.5 3.5V15.5H0.5Z" fill="#f6f6f6" stroke="#a9a9a9" stroke-width="1"/><path d="M8.5 0.5V3.5H11.5" fill="#dcdcdc" stroke="#a9a9a9" stroke-width="0.8"/></svg>
<span id="t74" class="t" style="top:565px;font-size:12px;line-height:17px;color:#fff;letter-spacing:-0.347px;left:212.40px;">147e3e2</span>
<div style="left:175px;top:584px;width:572px;height:20px;background:#333333;"></div>
<svg style="left:178px;top:587px;" width="13" height="13" viewBox="0 0 13 13"><rect x="0.5" y="0.5" width="12" height="12" fill="#fff" stroke="#262626"/><path d="M2.4 6.6L5 9.2L10.6 3.2" fill="none" stroke="#333" stroke-width="1.3"/></svg>
<svg style="left:195px;top:585px;" width="13" height="16" viewBox="0 0 13 16"><path d="M0.5 0.5H8.5L11.5 3.5V15.5H0.5Z" fill="#f6f6f6" stroke="#a9a9a9" stroke-width="1"/><path d="M8.5 0.5V3.5H11.5" fill="#dcdcdc" stroke="#a9a9a9" stroke-width="0.8"/></svg>
<span id="t75" class="t" style="top:586px;font-size:12px;line-height:17px;color:#fff;letter-spacing:-0.230px;left:212.40px;">242ef74</span>
<div style="left:175px;top:605px;width:572px;height:20px;background:#333333;"></div>
<svg style="left:178px;top:608px;" width="13" height="13" viewBox="0 0 13 13"><rect x="0.5" y="0.5" width="12" height="12" fill="#fff" stroke="#262626"/><path d="M2.4 6.6L5 9.2L10.6 3.2" fill="none" stroke="#333" stroke-width="1.3"/></svg>
<svg style="left:195px;top:606px;" width="13" height="16" viewBox="0 0 13 16"><path d="M0.5 0.5H8.5L11.5 3.5V15.5H0.5Z" fill="#f6f6f6" stroke="#a9a9a9" stroke-width="1"/><path d="M8.5 0.5V3.5H11.5" fill="#dcdcdc" stroke="#a9a9a9" stroke-width="0.8"/></svg>
<span id="t76" class="t" style="top:607px;font-size:12px;line-height:17px;color:#fff;letter-spacing:-0.127px;left:212.40px;">3115fa1</span>
<div style="left:175px;top:626px;width:572px;height:20px;background:#333333;"></div>
<svg style="left:178px;top:629px;" width="13" height="13" viewBox="0 0 13 13"><rect x="0.5" y="0.5" width="12" height="12" fill="#fff" stroke="#262626"/><path d="M2.4 6.6L5 9.2L10.6 3.2" fill="none" stroke="#333" stroke-width="1.3"/></svg>
<svg style="left:195px;top:627px;" width="13" height="16" viewBox="0 0 13 16"><path d="M0.5 0.5H8.5L11.5 3.5V15.5H0.5Z" fill="#f6f6f6" stroke="#a9a9a9" stroke-width="1"/><path d="M8.5 0.5V3.5H11.5" fill="#dcdcdc" stroke="#a9a9a9" stroke-width="0.8"/></svg>
<span id="t77" class="t" style="top:628px;font-size:12px;line-height:17px;color:#fff;letter-spacing:-0.234px;left:212.40px;">3815ed0</span>
<div style="left:175px;top:647px;width:572px;height:20px;background:#333333;"></div>
<svg style="left:178px;top:650px;" width="13" height="13" viewBox="0 0 13 13"><rect x="0.5" y="0.5" width="12" height="12" fill="#fff" stroke="#262626"/><path d="M2.4 6.6L5 9.2L10.6 3.2" fill="none" stroke="#333" stroke-width="1.3"/></svg>
<svg style="left:195px;top:648px;" width="13" height="16" viewBox="0 0 13 16"><path d="M0.5 0.5H8.5L11.5 3.5V15.5H0.5Z" fill="#f6f6f6" stroke="#a9a9a9" stroke-width="1"/><path d="M8.5 0.5V3.5H11.5" fill="#dcdcdc" stroke="#a9a9a9" stroke-width="0.8"/></svg>
<span id="t78" class="t" style="top:649px;font-size:12px;line-height:17px;color:#fff;letter-spacing:-0.417px;left:212.40px;">5254cdc89e00054b03d6fe4acb790171c...</span>
<span id="t79" class="t" style="top:649px;font-size:12px;line-height:17px;color:#dedede;letter-spacing:-0.218px;left:437.90px;">09-Jun-18 8:56 AM</span>
<span id="t80" class="t" style="top:649px;font-size:12px;line-height:17px;color:#dedede;letter-spacing:-0.411px;left:557.90px;">File</span>
<span id="t81" class="t" style="top:649px;font-size:12px;line-height:17px;color:#dedede;letter-spacing:-0.801px;right:622.50px;">10 KB</span>
<div style="left:175px;top:668px;width:572px;height:20px;background:#333333;"></div>
<svg style="left:178px;top:671px;" width="13" height="13" viewBox="0 0 13 13"><rect x="0.5" y="0.5" width="12" height="12" fill="#fff" stroke="#262626"/><path d="M2.4 6.6L5 9.2L10.6 3.2" fill="none" stroke="#333" stroke-width="1.3"/></svg>
<svg style="left:195px;top:669px;" width="13" height="16" viewBox="0 0 13 16"><path d="M0.5 0.5H8.5L11.5 3.5V15.5H0.5Z" fill="#f6f6f6" stroke="#a9a9a9" stroke-width="1"/><path d="M8.5 0.5V3.5H11.5" fill="#dcdcdc" stroke="#a9a9a9" stroke-width="0.8"/></svg>
<span id="t82" class="t" style="top:670px;font-size:12px;line-height:17px;color:#fff;letter-spacing:-0.541px;left:212.40px;">8080aeb672985456811d54272913ac4b7...</span>
<span id="t83" class="t" style="top:670px;font-size:12px;line-height:17px;color:#dedede;letter-spacing:-0.218px;left:437.90px;">09-Jun-18 8:56 AM</span>
<span id="t84" class="t" style="top:670px;font-size:12px;line-height:17px;color:#dedede;letter-spacing:-0.411px;left:557.90px;">File</span>
<span id="t85" class="t" style="top:670px;font-size:12px;line-height:17px;color:#dedede;letter-spacing:-0.801px;right:622.50px;">37 KB</span>
<div style="left:175px;top:689px;width:572px;height:20px;background:#333333;"></div>
<svg style="left:178px;top:692px;" width="13" height="13" viewBox="0 0 13 13"><rect x="0.5" y="0.5" width="12" height="12" fill="#fff" stroke="#262626"/><path d="M2.4 6.6L5 9.2L10.6 3.2" fill="none" stroke="#333" stroke-width="1.3"/></svg>
<svg style="left:195px;top:690px;" width="13" height="16" viewBox="0 0 13 16"><path d="M0.5 0.5H8.5L11.5 3.5V15.5H0.5Z" fill="#f6f6f6" stroke="#a9a9a9" stroke-width="1"/><path d="M8.5 0.5V3.5H11.5" fill="#dcdcdc" stroke="#a9a9a9" stroke-width="0.8"/></svg>
<span id="t86" class="t" style="top:691px;font-size:12px;line-height:17px;color:#fff;letter-spacing:-0.269px;left:212.40px;">8405cd896838fadbbc8e817fe9b88fb6a...</span>
<span id="t87" class="t" style="top:691px;font-size:12px;line-height:17px;color:#dedede;letter-spacing:-0.178px;left:437.90px;">23-Oct-18 6:58 AM</span>
<span id="t88" class="t" style="top:691px;font-size:12px;line-height:17px;color:#dedede;letter-spacing:-0.411px;left:557.90px;">File</span>
<span id="t89" class="t" style="top:691px;font-size:12px;line-height:17px;color:#dedede;letter-spacing:-0.696px;right:622.40px;">210 KB</span>
<div style="left:249px;top:260px;width:979px;height:392px;background:#0078d7;box-shadow:0 3px 14px 1px rgba(0,0,0,0.38);"></div>
<div style="left:250px;top:291px;width:977px;height:360px;background:#0c0c0c;"></div>
<div style="left:1210px;top:291px;width:17px;height:360px;background:#f0f0f0;"></div>
<div style="left:1211px;top:308px;width:15px;height:17px;background:#cdcdcd;"></div>
<svg style="left:1214px;top:297px;" width="9" height="7" viewBox="0 0 9 7"><path d="M1.3 5.4L4.5 2L7.7 5.4" fill="none" stroke="#505050" stroke-width="2"/></svg>
<svg style="left:1214px;top:639px;" width="9" height="7" viewBox="0 0 9 7"><path d="M1.3 1.6L4.5 5L7.7 1.6" fill="none" stroke="#505050" stroke-width="2"/></svg>
<svg style="left:258px;top:269px;" width="16" height="13" viewBox="0 0 16 13"><g shape-rendering="crispEdges"><rect x="0" y="0" width="16" height="13" fill="#9c918a"/><rect x="1" y="1" width="14" height="2" fill="#dde0e4"/><rect x="1" y="3" width="14" height="9" fill="#000"/><rect x="10" y="1" width="1" height="1" fill="#4a7fc0"/><rect x="12" y="1" width="1" height="1" fill="#4a7fc0"/><rect x="14" y="1" width="1" height="1" fill="#4a7fc0"/><rect x="3" y="5" width="2" height="1" fill="#fff"/><rect x="2" y="6" width="1" height="3" fill="#fff"/><rect x="3" y="9" width="2" height="1" fill="#fff"/><rect x="5" y="6" width="1" height="1" fill="#ddd"/><rect x="5" y="8" width="1" height="1" fill="#ddd"/><rect x="7" y="6" width="1" height="1" fill="#fff"/><rect x="7" y="8" width="1" height="1" fill="#fff"/><rect x="9" y="5" width="1" height="2" fill="#fff"/><rect x="10" y="7" width="1" height="3" fill="#fff"/><rect x="12" y="9" width="2" height="1" fill="#fff"/></g></svg>
<span id="t90" class="t" style="top:268px;font-size:12px;line-height:17px;color:#fff;letter-spacing:0.166px;left:278.90px;">Command Prompt</span>
<svg style="left:1108px;top:275px;" width="10" height="1" viewBox="0 0 10 1"><rect width="10" height="1" fill="#fff"/></svg>
<svg style="left:1153px;top:270px;" width="10" height="10" viewBox="0 0 10 10"><rect x="0.5" y="0.5" width="9" height="9" fill="none" stroke="#fff"/></svg>
<svg style="left:1199px;top:270px;" width="10" height="10" viewBox="0 0 10 10"><path d="M0.3 0.3L9.7 9.7M9.7 0.3L0.3 9.7" stroke="#fff" stroke-width="1.1" fill="none"/></svg>
<pre class="c" style="left:250px;top:292px;">Microsoft Windows [Version 10.0.18252.1000]</pre>
<pre class="c" style="left:250px;top:304px;">(c) 2018 Microsoft Corporation. All rights reserved.</pre>
<pre class="c" style="left:250px;top:328px;">C:\Users\anmol&gt;ren C:\Users\anmol\Desktop\Spotlight\*.* *.jpg</pre>
<div style="left:738px;top:336px;width:8px;height:3px;background:#dcdcdc;"></div>
</div></body></html>
